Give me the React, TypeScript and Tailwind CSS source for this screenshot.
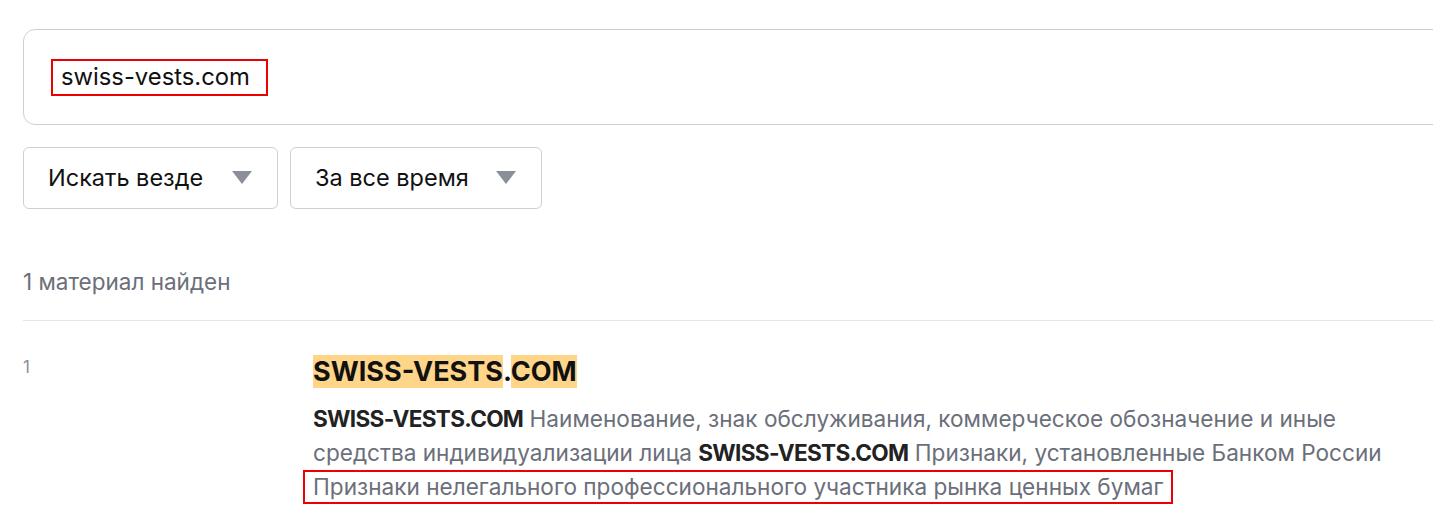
import { useState } from "react";

function Select({ label, width }: { label: string; width: string }) {
  return (
    <button className={`${width} h-[62px] flex items-center justify-between pl-[24px] pr-[25px] border border-[#cfcfd3] rounded-[6px] bg-white text-[23.5px] text-[#111]`}>
      <span>{label}</span>
      <svg width="20" height="14" viewBox="0 0 20 14" className="shrink-0">
        <path d="M0 0 H20 L10 13 Z" fill="#8a8f99" />
      </svg>
    </button>
  );
}

export default function App() {
  const [query] = useState("swiss-vests.com");

  return (
    <div className="w-[1433px] h-[523px] overflow-hidden bg-white font-['Inter',sans-serif]">
      <div className="pl-[23px] pt-[29px]">
        <div className="w-[1500px] h-[96px] border border-[#cfcfd3] rounded-[12px] flex items-center pl-[27px]">
          <div className="border-2 border-[#ee0000] pl-[8px] pr-[16px] h-[37px] flex items-center text-[23.8px] text-[#111] leading-none">
            {query}
          </div>
        </div>

        <div className="flex gap-[12px] mt-[22px]">
          <Select label="Искать везде" width="w-[255px]" />
          <Select label="За все время" width="w-[252px]" />
        </div>

        <p className="mt-[62px] text-[22.5px] text-[#6b6f7a] leading-none">1 материал найден</p>

        <div className="mt-[26px] border-t border-[#e6e6e6]" />

        <div className="grid grid-cols-[290px_1fr] pt-[34px]">
          <div className="text-[17px] text-[#8a8f99] leading-none pt-[4px]">1</div>
          <div>
            <h3 className="text-[27px] font-bold text-[#111] leading-[33px]">
              <span className="bg-[#ffd58a]">SWISS-VESTS</span>.<span className="bg-[#ffd58a]">COM</span>
            </h3>
            <div className="mt-[14px] w-[1085px] text-[22.6px] leading-[34px] text-[#6b6f7a]">
              <p>
                <b className="text-[#222] font-bold tracking-[-0.7px]">SWISS-VESTS.COM</b> Наименование, знак обслуживания, коммерческое обозначение и иные средства индивидуализации лица{" "}
                <b className="text-[#222] font-bold tracking-[-0.7px]">SWISS-VESTS.COM</b> Признаки, установленные Банком России
              </p>
              <p className="-ml-[10px] inline-block border-2 border-[#ee0000] pl-[8px] pr-[8px] leading-[30px]">
                Признаки нелегального профессионального участника рынка ценных бумаг
              </p>
            </div>
          </div>
        </div>
      </div>
    </div>
  );
}
